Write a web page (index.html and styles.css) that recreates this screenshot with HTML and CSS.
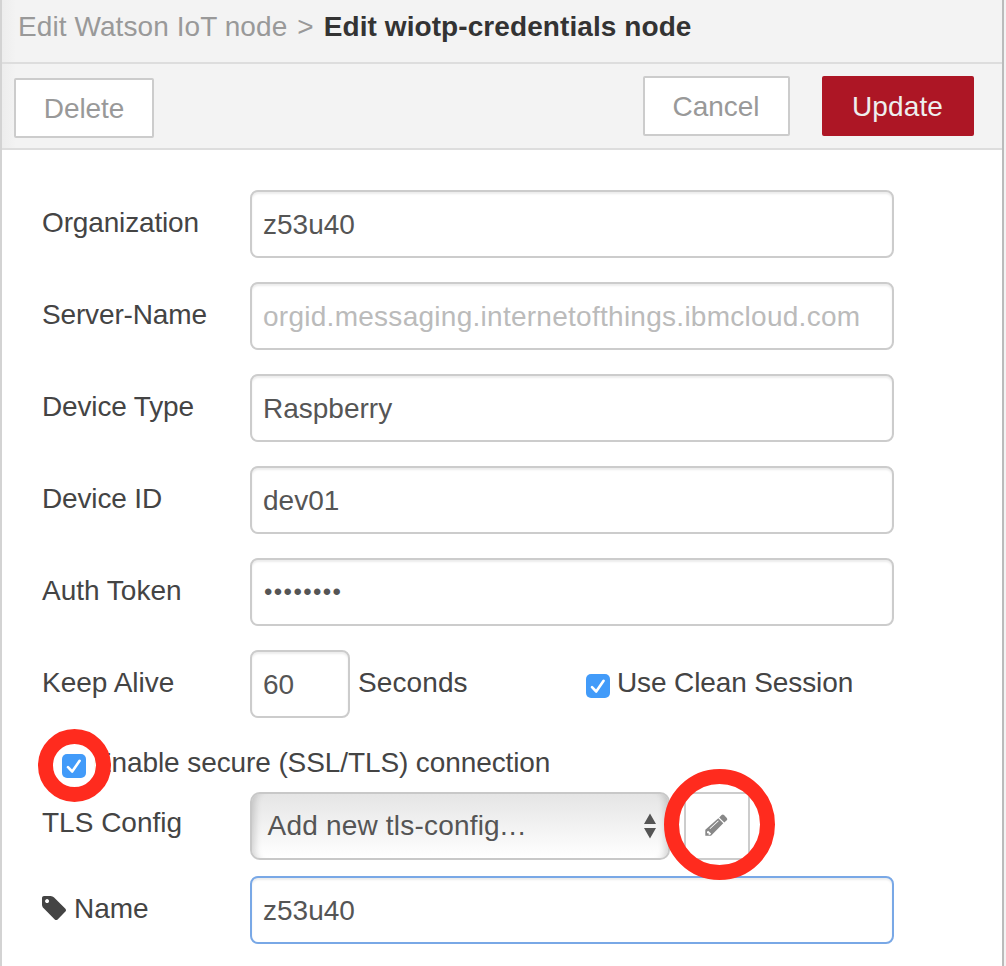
FILE: index.html
```html
<!DOCTYPE html>
<html lang="en">
<head>
<meta charset="utf-8">
<title>Edit wiotp-credentials node</title>
<link rel="stylesheet" href="styles.css">
</head>
<body>
<main class="tray">
  <header class="tray-header"><span class="crumb">Edit Watson IoT node</span><span class="crumb">&gt;</span><h1 class="title">Edit wiotp-credentials node</h1></header>
  <div class="toolbar">
    <button class="btn btn-delete">Delete</button>
    <button class="btn btn-cancel">Cancel</button>
    <button class="btn btn-primary">Update</button>
  </div>
  <form class="form">
    <div class="row"><label class="label label-tight" for="org">Organization</label><input class="field" id="org" type="text" value="z53u40"></div>
    <div class="row"><label class="label label-tight" for="server">Server-Name</label><input class="field" id="server" type="text" placeholder="orgid.messaging.internetofthings.ibmcloud.com"></div>
    <div class="row"><label class="label label-tight" for="type">Device Type</label><input class="field" id="type" type="text" value="Raspberry"></div>
    <div class="row"><label class="label label-tight" for="device">Device ID</label><input class="field" id="device" type="text" value="dev01"></div>
    <div class="row"><label class="label" for="token">Auth Token</label><input class="field field-secret" id="token" type="password" value="password"></div>
    <div class="row">
      <label class="label" for="keep">Keep Alive</label><input class="field field-short" id="keep" type="text" value="60">
      <span class="unit">Seconds</span>
      <span class="check"><svg width="24" height="24" viewBox="0 0 24 24"><path d="M6 13.2 10.2 17.5 17.6 6.8"/></svg></span>
      <span class="check-label">Use Clean Session</span>
    </div>
    <div class="row row-secure">
      <span class="check"><svg width="24" height="24" viewBox="0 0 24 24"><path d="M6 13.2 10.2 17.5 17.6 6.8"/></svg><span class="ring ring-small"></span></span>
      <span class="check-label">Enable secure (SSL/TLS) connection</span>
    </div>
    <div class="row row-tls">
      <span class="label">TLS Config</span>
      <div class="select"><span>Add new tls-config<span class="dots">...</span></span><svg width="14" height="26" viewBox="0 0 14 26"><path d="M7 0.5 13 11H1zM1 15h12L7 25.5z"/></svg></div>
      <div class="edit"><svg width="24" height="24" viewBox="0 0 24 24"><path fill-rule="evenodd" d="M1.300 22.700v-6L14.300 5.300l5 5L7 22.700zM3 18.800v1.400h1.600v1.600h1.500l1-1.200-3-2.900zM6.200 16.100l8.600-8-.7-.7-8.600 8zM15.200 4.400l2.400-2.300q1.200-1 2.400 0l2.800 2.800q1.100 1.200 0 2.400l-2.500 2.200z"/></svg><span class="ring ring-large"></span></div>
    </div>
    <div class="row row-name">
      <label class="label" for="name"><svg class="tag" width="24" height="24" viewBox="0 128 1515 1515"><path fill-rule="evenodd" d="M448 448q0-53-37.500-90.500T320 320t-90.500 37.500T192 448t37.500 90.500T320 576t90.500-37.500T448 448zm1067 576q0 53-37 90l-491 492q-39 37-91 37-53 0-90-37L91 890q-38-37-64.500-101T0 672V256q0-52 38-90t90-38h416q53 0 117 26.500T763 219l715 714q37 39 37 91z"/></svg>Name</label><input class="field field-focus" id="name" type="text" value="z53u40">
    </div>
  </form>
</main>
</body>
</html>
```
FILE: styles.css
```css
* { box-sizing: border-box; }
body { margin: 0; background: #f3f3f3; }
body, input, button { font: 28px/40px "Liberation Sans", Arial, sans-serif; }
.tray { width: 1004px; height: 966px; overflow: hidden; background: #fff; border-left: 2px solid #d3d3d3; border-right: 2px solid #bbb; color: #444; }
.tray-header { display: flex; align-items: flex-start; gap: 10px; height: 64px; padding: 7px 16px 0; background: linear-gradient(90deg, #ededed, #f3f3f3 14px); border-bottom: 2px solid #ddd; white-space: nowrap; letter-spacing: .08px; }
.crumb { color: #999; }
.title { margin: 0; font-size: 28px; line-height: 40px; font-weight: bold; color: #333; }
.toolbar { display: flex; align-items: flex-start; height: 86px; padding: 12px 28px 0 12px; background: linear-gradient(90deg, #ededed, #f3f3f3 14px); border-bottom: 2px solid #ddd; }
.btn { height: 60px; padding: 2px 1px 0 0; border: 2px solid #ccc; border-radius: 2px; background: #fff; color: #999; }
.btn-delete { width: 140px; margin-top: 2px; padding-right: 0; letter-spacing: -.1px; }
.btn-cancel { width: 147px; margin-left: auto; }
.btn-primary { width: 152px; margin-left: 32px; background: #ad1625; border-color: #ad1625; color: #eee; letter-spacing: .15px; }
.form { padding: 40px 0 0 40px; }
.row { display: flex; height: 68px; margin-bottom: 24px; white-space: nowrap; }
.label { flex: 0 0 208px; line-height: 66px; }
.label-tight { letter-spacing: -.15px; }
.field { width: 644px; height: 68px; padding: 2px 11px 0; border: 2px solid #ccc; border-radius: 8px; background: #fff; color: #555; box-shadow: inset 0 2px 2px rgba(0,0,0,.075); outline: none; }
.field::placeholder { color: #bbb; opacity: 1; letter-spacing: .27px; }
.field-secret { padding: 0 12px; font-size: 24px; letter-spacing: 1.4px; }
.field-short { width: 100px; }
.field-focus { border-color: #79a8e6; }
.unit { width: 236px; padding-left: 8px; line-height: 66px; letter-spacing: .1px; }
.check { position: relative; flex: none; width: 24px; height: 24px; margin-top: 24px; border-radius: 5px; background: #429bf9; }
.check svg { display: block; fill: none; stroke: #fff; stroke-width: 2.6; stroke-linecap: round; stroke-linejoin: round; }
.check-label { margin-left: 7px; line-height: 66px; letter-spacing: -.12px; }
.row-secure { height: 40px; margin: 0 0 10px; padding-left: 20px; }
.row-secure .check { margin-top: 12px; }
.row-secure .check-label { margin-left: 7px; line-height: 42px; letter-spacing: -.1px; }
.row-tls { margin-bottom: 16px; }
.row-tls .label { line-height: 62px; }
.select { display: flex; align-items: center; justify-content: space-between; width: 420px; height: 68px; padding: 0 11px 0 15.5px; border: 2px solid #c8c8c8; border-radius: 10px; background: linear-gradient(#e5e5e5, #fff); box-shadow: inset 10px 0 7px -7px rgba(0,0,0,.16), inset -10px 0 7px -7px rgba(0,0,0,.16); color: #555; letter-spacing: .2px; }
.select svg { fill: #555; }
.dots { letter-spacing: 1.2px; }
.edit { position: relative; display: flex; align-items: center; justify-content: center; width: 66px; height: 68px; margin-left: 14px; padding: 0 2px 2px 0; border: 2px solid #ccc; border-radius: 4px; }
.edit svg { fill: #888; }
.ring { position: absolute; border: 15px solid #ff2b1e; border-radius: 50%; }
.ring-small { width: 73px; height: 73px; left: -24px; top: -25px; box-shadow: inset 0 0 0 1px #fff; }
.ring-large { width: 111px; height: 111px; left: -22px; top: -25px; }
.tag { margin-right: 8px; vertical-align: -2px; fill: #444; }
```
